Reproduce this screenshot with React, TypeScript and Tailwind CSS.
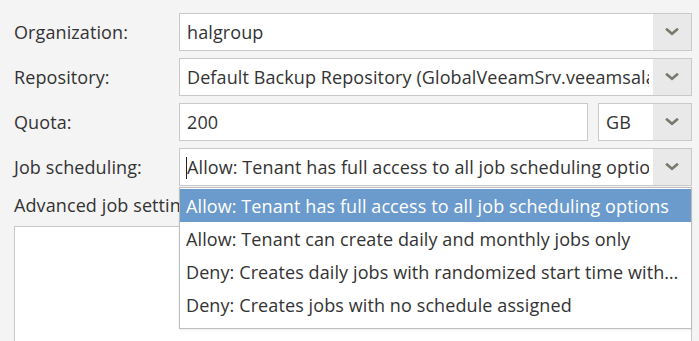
import React from "react";

function Chevron() {
  return (
    <svg width="14" height="8" viewBox="0 0 14 8" className="block">
      <path d="M2 1.5 L7 5.8 L12 1.5" fill="none" stroke="#78786b" strokeWidth="2.5" strokeLinecap="square" />
    </svg>
  );
}

function Select({ value, cursor, className = "" }: { value: string; cursor?: boolean; className?: string }) {
  return (
    <div className={"flex h-[38px] border border-[#c9c9c9] bg-white " + className}>
      <div className="relative mr-[4px] flex min-w-0 flex-1 items-center overflow-hidden whitespace-nowrap pl-[7px]">
        {cursor && <span className="absolute left-[6px] top-[8px] h-[22px] w-[1px] bg-[#222]" />}
        <span>{value}</span>
      </div>
      <div className="flex w-[38px] shrink-0 items-center justify-center bg-[#e9e9e9]">
        <Chevron />
      </div>
    </div>
  );
}

function Row({ label, children }: { label: string; children: React.ReactNode }) {
  return (
    <div className="flex items-center">
      <div className="w-[165px] shrink-0">{label}</div>
      <div className="flex min-w-0 flex-1">{children}</div>
    </div>
  );
}

export default function App() {
  const options = [
    "Allow: Tenant has full access to all job scheduling options",
    "Allow: Tenant can create daily and monthly jobs only",
    "Deny: Creates daily jobs with randomized start time within the specified backup window",
    "Deny: Creates jobs with no schedule assigned",
  ];
  return (
    <div
      className="relative h-[341px] w-[699px] overflow-hidden bg-[#f4f4f4] text-[18px] leading-[22px] tracking-[0.1px] text-[#333]"
      style={{ fontFamily: "'Open Sans', 'Noto Sans', sans-serif" }}
    >
      <div className="flex flex-col gap-[7px] pl-[14px] pr-[7px] pt-[13px]">
        <Row label="Organization:">
          <Select value="halgroup" className="flex-1" />
        </Row>
        <Row label="Repository:">
          <Select value="Default Backup Repository (GlobalVeeamSrv.veeamsalab.local)" className="flex-1 min-w-0" />
        </Row>
        <Row label="Quota:">
          <div className="flex flex-1 gap-[10px]">
            <div className="flex h-[38px] flex-1 items-center border border-[#c9c9c9] bg-white pl-[7px]">200</div>
            <Select value="GB" className="w-[94px]" />
          </div>
        </Row>
        <Row label="Job scheduling:">
          <Select value={options[0]} cursor className="flex-1 min-w-0" />
        </Row>
        <div className="mt-[1px] whitespace-nowrap">Advanced job settings:</div>
        <div className="mt-[3px] h-[140px] border border-[#c9c9c9] bg-white" />
      </div>

      <div className="absolute left-[179px] top-[187px] w-[513px] border border-[#bdbdbd] bg-white pb-[7px] pt-[1px] shadow-[0_1px_2px_rgba(0,0,0,0.08)]">
        {options.map((o, i) => (
          <div
            key={i}
            className={
              "flex h-[33px] items-center overflow-hidden pl-[6px] pr-[10px] " +
              (i === 0 ? "bg-[#6b9bcd] text-white" : "text-[#333]")
            }
          >
            <span className="truncate">{o}</span>
          </div>
        ))}
      </div>
    </div>
  );
}
